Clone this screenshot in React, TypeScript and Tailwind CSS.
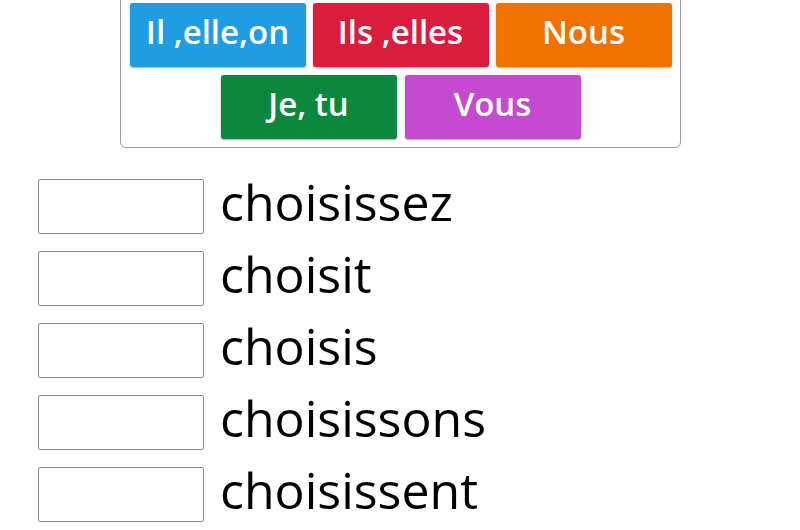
import React from "react";

const buttons1 = [
  { label: "Il ,elle,on", bg: "bg-[#1f9de2]" },
  { label: "Ils ,elles", bg: "bg-[#da1d3c]" },
  { label: "Nous", bg: "bg-[#f07000]" },
];
const buttons2 = [
  { label: "Je, tu", bg: "bg-[#0c873e]" },
  { label: "Vous", bg: "bg-[#c44bd0]" },
];
const words = ["choisissez", "choisit", "choisis", "choisissons", "choisissent"];

function Btn({ label, bg }: { label: string; bg: string }) {
  return (
    <div
      className={`${bg} w-[176px] h-[64px] rounded-[3px] flex items-center justify-center text-white text-[33px] font-semibold shadow-[0_1px_2px_rgba(0,0,0,0.35)] pb-[6px]`}
    >
      {label}
    </div>
  );
}

export default function App() {
  return (
    <div
      className="w-[800px] h-[530px] bg-white overflow-hidden"
      style={{ fontFamily: '"Open Sans", "Noto Sans", sans-serif' }}
    >
      <div className="pl-[120px]">
        <div className="w-[561px] mt-[-10px] border border-[#9a9a9a] rounded-md pt-[12px] pb-[8px] flex flex-col gap-[8px]">
          <div className="flex justify-center gap-[7px]">
            {buttons1.map((b) => (
              <Btn key={b.label} {...b} />
            ))}
          </div>
          <div className="flex justify-center gap-[8px]">
            {buttons2.map((b) => (
              <Btn key={b.label} {...b} />
            ))}
          </div>
        </div>
      </div>
      <div className="mt-[31px] pl-[38px] flex flex-col gap-[17px]">
        {words.map((w) => (
          <div key={w} className="flex items-center gap-[16px]">
            <div className="w-[166px] h-[55px] border border-[#8c8c8c] rounded-[2px] bg-white" />
            <div className="text-[50px] leading-[68px] text-black pb-[10px] h-[55px] flex items-center">
              {w}
            </div>
          </div>
        ))}
      </div>
    </div>
  );
}
